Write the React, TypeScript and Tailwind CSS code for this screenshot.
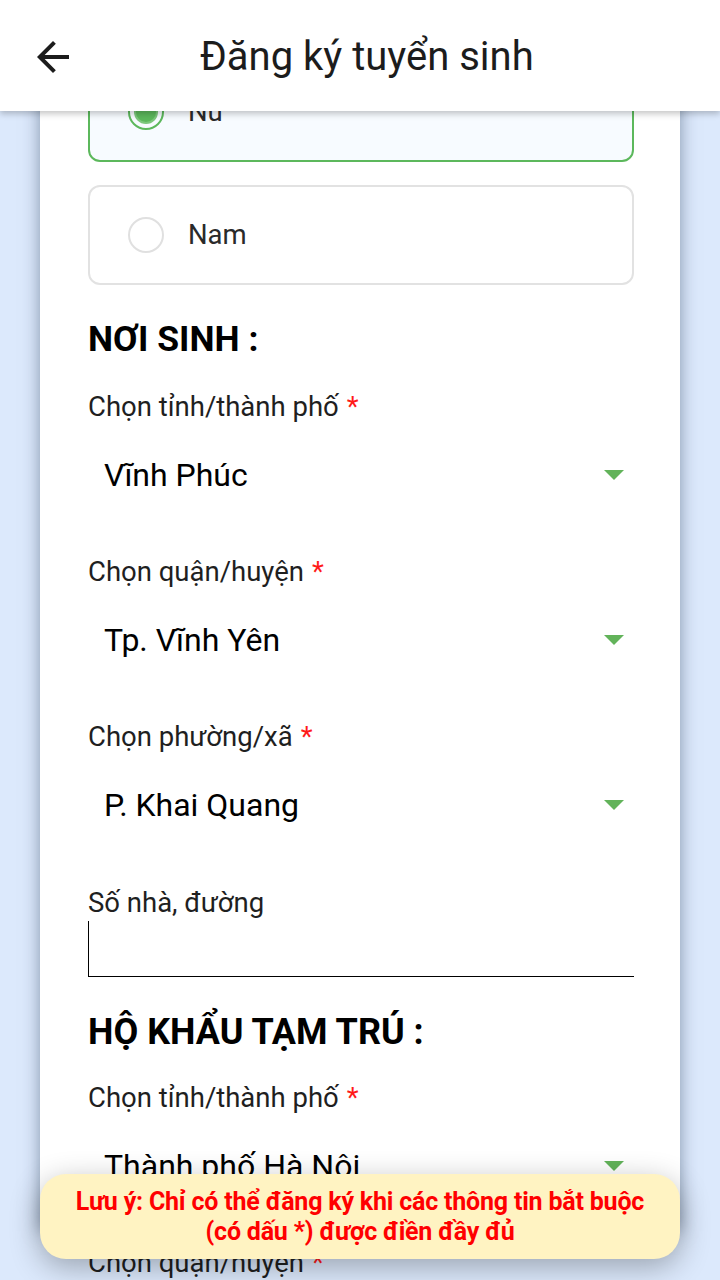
const font = { fontFamily: "Roboto, 'Noto Sans', sans-serif" }

function Required({ text }: { text: string }) {
  return (
    <div className="h-[36px] flex items-center text-[27.5px] text-[#1f1f1f] leading-none">
      {text}
      <span className="ml-[8px] text-[#ff1a1a]">*</span>
    </div>
  )
}

function SelectRow({ value }: { value: string }) {
  return (
    <div className="h-[64px] mt-[18px] flex items-center justify-between pl-[16px] pr-[10px]">
      <span className="text-[32px] text-black leading-none">{value}</span>
      <svg width="20" height="10" viewBox="0 0 20 10">
        <path d="M0 0h20L10 10z" fill="#62b35a" />
      </svg>
    </div>
  )
}

function Radio({ label, checked }: { label: string; checked?: boolean }) {
  return (
    <div
      className={
        checked
          ? "h-[100px] rounded-[12px] border-2 border-[#5cb85c] bg-[#f7fbff] flex items-center pl-[38px]"
          : "h-[100px] rounded-[12px] border-2 border-[#e2e2e2] bg-white flex items-center pl-[38px]"
      }
    >
      {checked ? (
        <span className="w-[36px] h-[36px] rounded-full border-2 border-[#5cb85c] flex items-center justify-center">
          <span className="w-[20px] h-[20px] rounded-full bg-[#5cb85c] ring-2 ring-[#7cc77c]" />
        </span>
      ) : (
        <span className="w-[36px] h-[36px] rounded-full border-2 border-[#e0e0e0]" />
      )}
      <span className="ml-[24px] text-[27.5px] text-[#2a2a2a] leading-none">{label}</span>
    </div>
  )
}

export default function App() {
  return (
    <div className="relative w-[720px] h-[1280px] overflow-hidden bg-[#dce9fc] flex flex-col" style={font}>
      {/* Header */}
      <header className="relative z-10 h-[111px] shrink-0 bg-white flex items-center pt-[2px] shadow-[0_3px_6px_rgba(0,0,0,0.22)]">
        <svg className="ml-[37px] w-[32px] h-[32px]" viewBox="4 4 16 16" fill="#1c1c1c">
          <path d="M20 11H7.83l5.59-5.59L12 4l-8 8 8 8 1.41-1.41L7.83 13H20v-2z" />
        </svg>
        <h1 className="ml-[131px] text-[40px] text-[#1c1c1c] leading-none">Đăng ký tuyển sinh</h1>
      </header>

      {/* Scrolled form */}
      <main className="flex-1 overflow-hidden">
        <div className="mx-[40px] h-full bg-white shadow-[0_0_16px_rgba(40,60,90,0.5)]">
          <div className="pl-[48px] pr-[46px] -mt-[49px]">
            <Radio label="Nữ" checked />
            <div className="mt-[23px]">
              <Radio label="Nam" />
            </div>

            <h2 className="mt-[31px] h-[48px] flex items-center text-[35.5px] font-bold text-black leading-none">NƠI SINH :</h2>

            <div className="mt-[25px]">
              <Required text="Chọn tỉnh/thành phố" />
              <SelectRow value="Vĩnh Phúc" />
            </div>
            <div className="mt-[47px]">
              <Required text="Chọn quận/huyện" />
              <SelectRow value="Tp. Vĩnh Yên" />
            </div>
            <div className="mt-[47px]">
              <Required text="Chọn phường/xã" />
              <SelectRow value="P. Khai Quang" />
            </div>

            <div className="mt-[48px] h-[36px] flex items-center text-[27.5px] text-[#1f1f1f] leading-none">Số nhà, đường</div>
            <input type="text" className="block w-full h-[56px] border-l border-b border-black outline-none" />

            <h2 className="mt-[31px] h-[48px] flex items-center text-[36px] font-bold text-black leading-none">HỘ KHẨU TẠM TRÚ :</h2>

            <div className="mt-[24px]">
              <Required text="Chọn tỉnh/thành phố" />
              <SelectRow value="Thành phố Hà Nội" />
            </div>
            <div className="mt-[47px]">
              <Required text="Chọn quận/huyện" />
            </div>
          </div>
        </div>
      </main>

      {/* Toast */}
      <div className="absolute left-[40px] right-[40px] bottom-[21px] h-[85px] rounded-[26px] bg-[#fff3c2] flex items-center justify-center shadow-[0_8px_30px_rgba(0,0,0,0.3)]">
        <p className="text-center text-[25px] leading-[30px] font-bold text-[#ff0000] tracking-[-0.2px]">
          Lưu ý: Chỉ có thể đăng ký khi các thông tin bắt buộc
          <br />
          (có dấu *) được điền đầy đủ
        </p>
      </div>
    </div>
  )
}
